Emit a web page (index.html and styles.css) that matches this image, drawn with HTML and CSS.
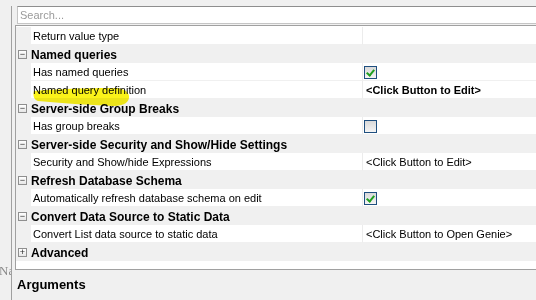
FILE: index.html
```html
<!DOCTYPE html>
<html lang="en">
<head>
  <meta charset="UTF-8" />
  <title>Properties</title>
  <link rel="stylesheet" href="styles.css">
</head>
<body>
  <!-- label of the control behind the panel, mostly hidden -->
  <div class="back-label">Na</div>

  <div class="panel">
    <div class="search">Search...</div>

    <div class="grid">
      <div class="row prop">
        <span class="margin"></span>
        <span class="name">Return value type</span>
        <span class="value"></span>
      </div>

      <div class="row cat">
        <span class="toggle">&minus;</span>
        <span class="cat-name">Named queries</span>
      </div>
      <div class="row prop">
        <span class="margin"></span>
        <span class="name">Has named queries</span>
        <span class="value"><span class="check on"></span></span>
      </div>
      <div class="row prop">
        <span class="margin"></span>
        <span class="name">Named query definition</span>
        <span class="value bold">&lt;Click Button to Edit&gt;</span>
        <svg class="marker" width="98" height="22" viewBox="0 0 98 22">
          <path d="M1 6 C20 4 55 3 84 3 C92 4 97 8 96 13 C95 19 88 21 80 21 C55 20 28 18 5 16 C0 15 0 8 1 6 Z" fill="#fbf31a"/>
        </svg>
      </div>

      <div class="row cat">
        <span class="toggle">&minus;</span>
        <span class="cat-name">Server-side Group Breaks</span>
      </div>
      <div class="row prop">
        <span class="margin"></span>
        <span class="name">Has group breaks</span>
        <span class="value"><span class="check"></span></span>
      </div>

      <div class="row cat">
        <span class="toggle">&minus;</span>
        <span class="cat-name">Server-side Security and Show/Hide Settings</span>
      </div>
      <div class="row prop">
        <span class="margin"></span>
        <span class="name">Security and Show/hide Expressions</span>
        <span class="value">&lt;Click Button to Edit&gt;</span>
      </div>

      <div class="row cat">
        <span class="toggle">&minus;</span>
        <span class="cat-name">Refresh Database Schema</span>
      </div>
      <div class="row prop">
        <span class="margin"></span>
        <span class="name">Automatically refresh database schema on edit</span>
        <span class="value"><span class="check on"></span></span>
      </div>

      <div class="row cat">
        <span class="toggle">&minus;</span>
        <span class="cat-name">Convert Data Source to Static Data</span>
      </div>
      <div class="row prop">
        <span class="margin"></span>
        <span class="name">Convert List data source to static data</span>
        <span class="value">&lt;Click Button to Open Genie&gt;</span>
      </div>

      <div class="row cat">
        <span class="toggle">+</span>
        <span class="cat-name">Advanced</span>
      </div>
    </div>

    <div class="section-title">Arguments</div>
  </div>
</body>
</html>
```
FILE: styles.css
```css
* {
  margin: 0;
  padding: 0;
  box-sizing: border-box;
}

body {
  font-family: "Liberation Sans", Arial, sans-serif;
  font-size: 11px;
  color: #000;
  background: #f0f0f0;
  height: 300px;
  overflow: hidden;
  position: relative;
}

/* partly hidden label of the control underneath */
.back-label {
  position: absolute;
  left: -1px;
  top: 263px;
  font-family: "Liberation Serif", serif;
  font-size: 13px;
  color: #8a8a8a;
}

/* Main panel */
.panel {
  position: relative;
  margin-left: 11px;
  height: 300px;
  border-left: 1px solid #a0a0a0;
  background: #f0f0f0;
}

.search {
  margin: 6px 0 0 5px;
  height: 18px;
  padding: 2px 0 0 2px;
  background: #fff;
  border: 1px solid #c5c5c5;
  border-top-color: #8e8e8e;
  border-right: none;
  color: #9a9a9a;
  font-size: 11px;
  line-height: 13px;
}

/* Property grid */
.grid {
  margin: 1px 0 0 3px;
  height: 245px;
  padding-top: 1px;
  background: #fff;
  border-top: 1px solid #a0a0a0;
  border-left: 1px solid #a0a0a0;
  border-bottom: 1px solid #a0a0a0;
}

.row {
  position: relative;
  display: flex;
  height: 18px;
  align-items: center;
}

.prop .margin {
  width: 15px;
  height: 100%;
  background: #f0f0f0;
}
.prop .name {
  width: 332px;
  height: 100%;
  padding: 3px 0 0 2px;
  line-height: 13px;
  border-bottom: 1px solid #f0f0f0;
  border-right: 1px solid #ececec;
  white-space: nowrap;
  overflow: hidden;
  position: relative;
  z-index: 1;
}
.prop .value {
  flex: 1;
  height: 100%;
  padding: 3px 0 0 3px;
  line-height: 13px;
  border-bottom: 1px solid #f0f0f0;
  white-space: nowrap;
}
.value.bold {
  font-weight: bold;
}

/* yellow highlighter stroke over one name */
.marker {
  position: absolute;
  left: 17px;
  top: 4px;
  mix-blend-mode: multiply;
  z-index: 2;
}

.cat {
  background: #f0f0f0;
  padding-top: 1px;
}
.toggle {
  width: 9px;
  height: 9px;
  margin: 0 4px 0 2px;
  border: 1px solid #8f8f8f;
  background: linear-gradient(#fff, #e6e6e6);
  color: #2a2a2a;
  font-size: 9px;
  line-height: 7px;
  text-align: center;
}
.cat-name {
  font-weight: bold;
  font-size: 12px;
}

/* checkboxes */
.check {
  display: block;
  width: 13px;
  height: 13px;
  margin-left: -2px;
  border: 1px solid #1f4f7f;
  background: linear-gradient(#d9d9d9, #f4f4f4);
  position: relative;
}
.check.on::after {
  content: "";
  position: absolute;
  left: 3px;
  top: 1px;
  width: 3px;
  height: 6px;
  border: solid #20a020;
  border-width: 0 2px 2px 0;
  transform: rotate(40deg);
}

.section-title {
  margin: 7px 0 0 5px;
  font-weight: bold;
  font-size: 13px;
}
```
